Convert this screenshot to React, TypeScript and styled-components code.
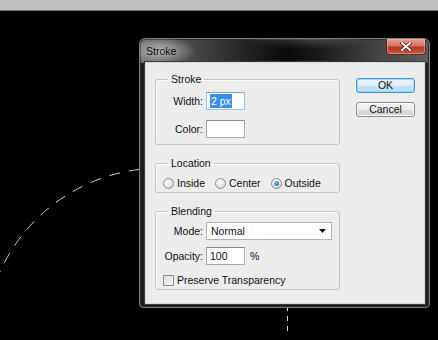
import styled, { createGlobalStyle } from 'styled-components';

const GlobalStyle = createGlobalStyle`
  html, body {
    margin: 0;
    padding: 0;
    background: #000;
    height: 340px;
    overflow: hidden;
  }
  body {
    font-family: 'Liberation Sans', Arial, sans-serif;
    font-size: 10.5px;
    color: #111;
  }
`;

const Page = styled.div`
  position: relative;
  width: 438px;
  height: 340px;
  background: #000;
`;

const TopBar = styled.div`
  height: 10px;
  background: #c2c2c2;
  border-bottom: 1px solid #6e6e6e;
`;

const Canvas = styled.svg`
  position: absolute;
  left: 0;
  top: 0;
  pointer-events: none;
`;

const Window = styled.div`
  position: relative;
  margin: 27px 0 0 139px;
  width: 291px;
  height: 270px;
  box-sizing: border-box;
  border: 1px solid #7d7d7d;
  border-radius: 6px 6px 4px 4px;
  background: #1c1c1c;
  padding: 0 4px 3px 5px;
  display: flex;
  flex-direction: column;
  box-shadow: inset 0 0 0 1px #2c2c2c;
  background-image: linear-gradient(
    90deg,
    #6a6a6a 0%,
    #3a3a3a 25%,
    #0a0a0a 50%,
    #1a1a1a 62%,
    #4a4a4a 85%,
    #5e5e5e 100%
  );
  background-size: 100% 24px;
  background-repeat: no-repeat;
`;

const TitleBar = styled.div`
  height: 23px;
  display: flex;
  align-items: flex-start;
  justify-content: space-between;
  background:
    radial-gradient(ellipse 36px 15px at 20px 12px, rgba(200, 200, 200, 0.85), transparent),
    radial-gradient(ellipse 70px 10px at 170px 0px, rgba(140, 140, 140, 0.35), transparent);
  margin: 0 -4px 0 -5px;
  padding: 0 4px 0 6px;
  border-radius: 6px 6px 0 0;
`;

const Title = styled.span`
  margin-top: 6px;
  line-height: 13px;
  font-size: 10.5px;
  color: #0c0c0c;
`;

const CloseButton = styled.div`
  width: 40px;
  height: 16px;
  margin-right: -1px;
  box-sizing: border-box;
  border: 1px solid #5a2a24;
  border-top: none;
  border-radius: 0 0 4px 4px;
  background: linear-gradient(180deg, #e2a394 0%, #d0735e 45%, #b43a22 55%, #c2553c 100%);
  box-shadow: inset 0 0 0 1px rgba(255, 200, 190, 0.45);
  display: flex;
  align-items: center;
  justify-content: center;
`;

const Content = styled.div`
  flex: 1;
  background: #ececec;
  border: 1px solid #d8d8d8;
  box-shadow: 0 0 0 1px #3a3a3a;
  display: flex;
  padding: 10px 0 0 9px;
  gap: 16px;
`;

const Groups = styled.div`
  width: 185px;
  display: flex;
  flex-direction: column;
  gap: 12px;
`;

const Group = styled.fieldset`
  margin: 0;
  padding: 0;
  min-width: 0;
  border: 1px solid #c4c4c4;
  border-radius: 3px;
  box-shadow: inset 1px 1px 0 #fafafa;
`;

const Legend = styled.legend`
  margin-left: 12px;
  padding: 0 3px;
  line-height: 13px;
  font-size: 10.5px;
  color: #111;
`;

const FieldGrid = styled.div<{ $top: number; $bottom: number; $rowGap: number }>`
  display: grid;
  grid-template-columns: 47px auto;
  column-gap: 3px;
  row-gap: ${p => p.$rowGap}px;
  align-items: center;
  padding: ${p => p.$top}px 0 ${p => p.$bottom}px 0;
`;

const Label = styled.span`
  text-align: right;
  white-space: nowrap;
  line-height: 13px;
`;

const Field = styled.div`
  display: flex;
  align-items: center;
  gap: 5px;
`;

const TextBox = styled.div<{ $width: number; $focused?: boolean }>`
  width: ${p => p.$width}px;
  height: 18px;
  box-sizing: border-box;
  background: #fff;
  border: 1px solid ${p => (p.$focused ? '#8fc3ea' : '#a9a9a9')};
  border-top-color: ${p => (p.$focused ? '#6aaee0' : '#8a8a8a')};
  display: flex;
  align-items: center;
  padding-left: 3px;
  line-height: 13px;
`;

const Selection = styled.span`
  background: #3a8ee6;
  color: #fff;
  padding: 0 1px;
  line-height: 14px;
`;

const SelectBox = styled(TextBox)`
  justify-content: space-between;
  padding: 0 5px 0 4px;
  border-color: #b4b4b4;
`;

const RadioRow = styled.div`
  display: flex;
  align-items: center;
  gap: 10px;
  height: 12px;
  padding: 7px 0 3px 7px;
`;

const Option = styled.label`
  display: flex;
  align-items: center;
  gap: 3px;
  line-height: 13px;
`;

const Radio = styled.span<{ $checked?: boolean }>`
  width: 11px;
  height: 11px;
  box-sizing: border-box;
  border-radius: 50%;
  border: 1px solid #8c8c8c;
  background: radial-gradient(circle at 40% 35%, #ffffff 0%, #e4e4e4 55%, #c8c8c8 100%);
  display: flex;
  align-items: center;
  justify-content: center;

  &::after {
    content: '';
    display: ${p => (p.$checked ? 'block' : 'none')};
    width: 5px;
    height: 5px;
    border-radius: 50%;
    background: radial-gradient(circle at 35% 35%, #7cc4f0, #1d5e96);
  }
`;

const CheckRow = styled.label`
  display: flex;
  align-items: center;
  gap: 3px;
  height: 14px;
  margin-top: 8px;
  padding: 0 0 2px 7px;
  line-height: 13px;
`;

const CheckBox = styled.span`
  width: 11px;
  height: 11px;
  box-sizing: border-box;
  border: 1px solid #8c8c8c;
  background: linear-gradient(135deg, #dcdcdc, #fafafa);
`;

const Buttons = styled.div`
  display: flex;
  flex-direction: column;
  gap: 9px;
  padding-top: 5px;
`;

const Button = styled.div<{ $default?: boolean }>`
  width: 59px;
  height: 15px;
  box-sizing: border-box;
  border-radius: 3px;
  border: 1px solid ${p => (p.$default ? '#3e9ad6' : '#8a8a8a')};
  background: ${p =>
    p.$default
      ? 'linear-gradient(180deg, #eef7fd 0%, #dcedf9 50%, #c4e2f6 52%, #bcdcf2 100%)'
      : 'linear-gradient(180deg, #f4f4f4 0%, #ebebeb 50%, #dcdcdc 52%, #d2d2d2 100%)'};
  box-shadow: inset 0 0 0 1px ${p => (p.$default ? '#9ed6f4' : '#fbfbfb')};
  display: flex;
  align-items: center;
  justify-content: center;
  line-height: 13px;
  color: #111;
`;

const CloseGlyph = () => (
  <svg width="12" height="9" viewBox="0 0 12 9">
    <path d="M2 1 L10 8 M10 1 L2 8" stroke="#4a1a12" strokeWidth="3.4" strokeLinecap="square" />
    <path d="M2 1 L10 8 M10 1 L2 8" stroke="#fff" strokeWidth="2" strokeLinecap="square" />
  </svg>
);

const Arrow = () => (
  <svg width="7" height="4" viewBox="0 0 7 4">
    <path d="M0 0 H7 L3.5 4 Z" fill="#111" />
  </svg>
);

const App = () => {
  return (
    <>
      <GlobalStyle />
      <Page>
        <TopBar />
        <Canvas width="438" height="340" viewBox="0 0 438 340">
          <path
            d="M -10 300 A 176 176 0 0 1 300 237"
            fill="none"
            stroke="#cfcfcf"
            strokeWidth="1"
            strokeDasharray="11 9"
          />
          <line x1="287.5" y1="306" x2="287.5" y2="336" stroke="#d8d8d8" strokeWidth="1" strokeDasharray="5 5" />
        </Canvas>
        <Window>
          <TitleBar>
            <Title>Stroke</Title>
            <CloseButton>
              <CloseGlyph />
            </CloseButton>
          </TitleBar>
          <Content>
            <Groups>
              <Group>
                <Legend>Stroke</Legend>
                <FieldGrid $top={6} $bottom={6} $rowGap={10}>
                  <Label>Width:</Label>
                  <TextBox $width={39} $focused>
                    <Selection>2 px</Selection>
                  </TextBox>
                  <Label>Color:</Label>
                  <TextBox $width={39} />
                </FieldGrid>
              </Group>
              <Group>
                <Legend>Location</Legend>
                <RadioRow>
                  <Option>
                    <Radio />
                    Inside
                  </Option>
                  <Option>
                    <Radio />
                    Center
                  </Option>
                  <Option>
                    <Radio $checked />
                    Outside
                  </Option>
                </RadioRow>
              </Group>
              <Group>
                <Legend>Blending</Legend>
                <FieldGrid $top={4} $bottom={0} $rowGap={7}>
                  <Label>Mode:</Label>
                  <SelectBox $width={126}>
                    Normal
                    <Arrow />
                  </SelectBox>
                  <Label>Opacity:</Label>
                  <Field>
                    <TextBox $width={39}>100</TextBox>%
                  </Field>
                </FieldGrid>
                <CheckRow>
                  <CheckBox />
                  Preserve Transparency
                </CheckRow>
              </Group>
            </Groups>
            <Buttons>
              <Button $default>OK</Button>
              <Button>Cancel</Button>
            </Buttons>
          </Content>
        </Window>
      </Page>
    </>
  );
};

export default App;
